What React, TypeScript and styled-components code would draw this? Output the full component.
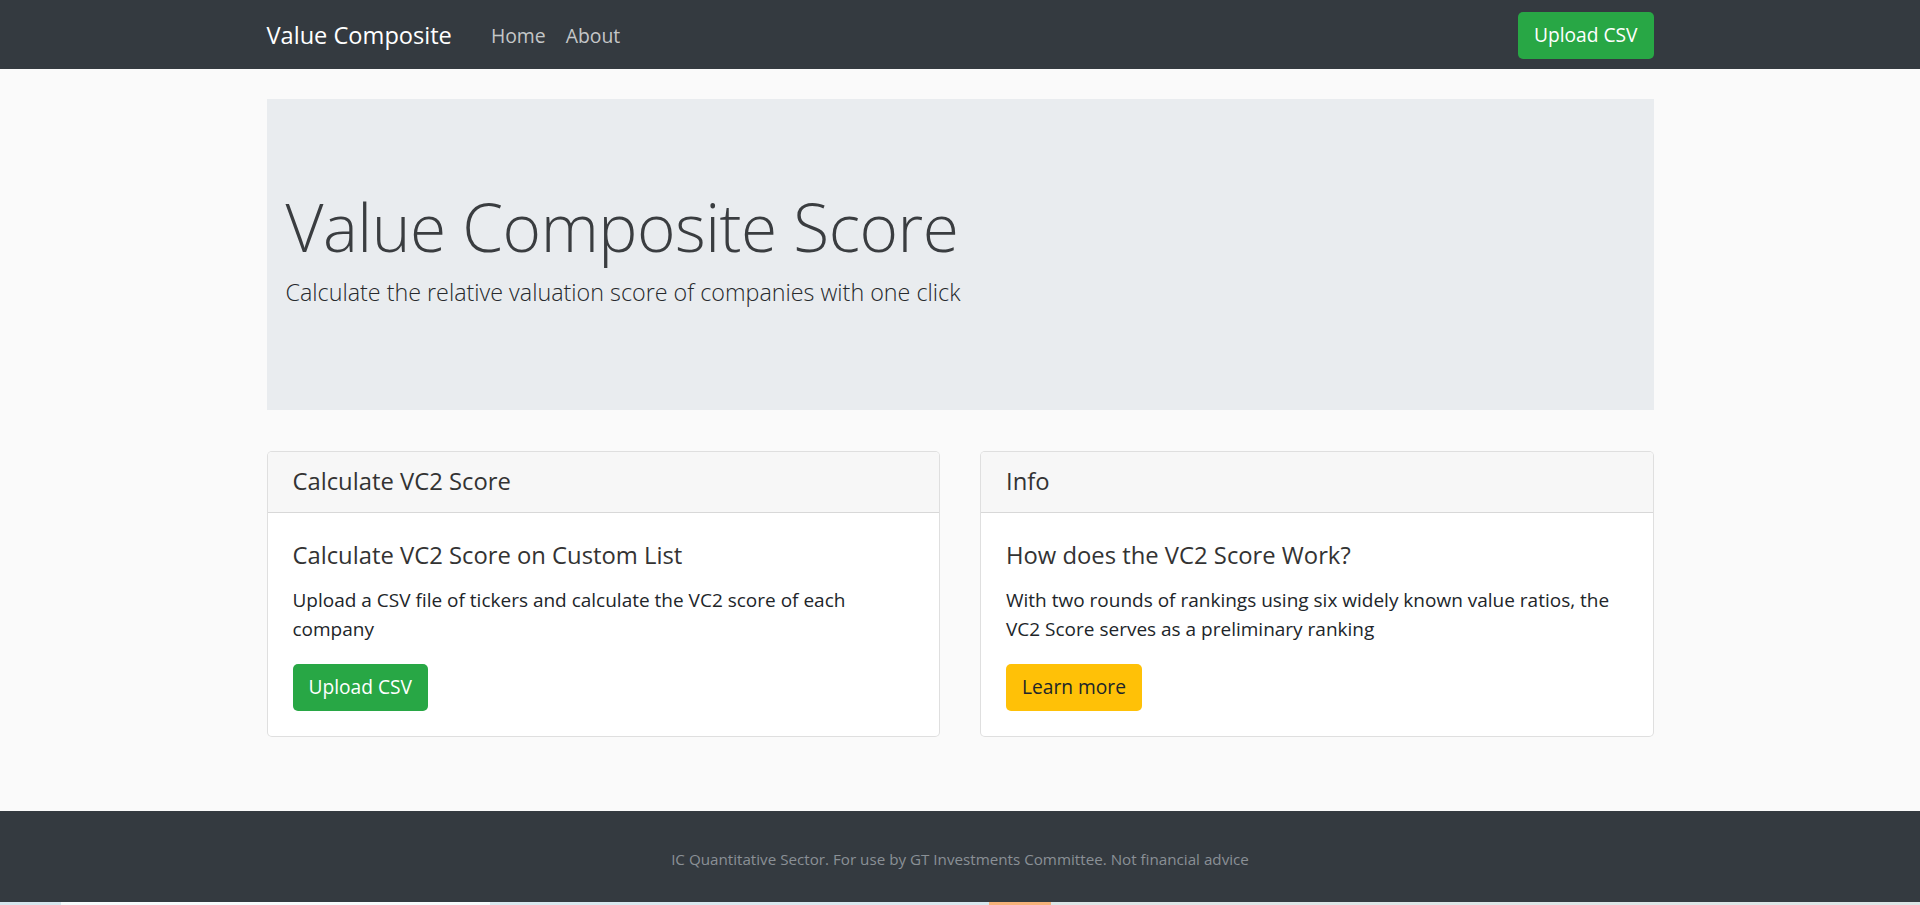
import styled, { createGlobalStyle } from "styled-components";

const GlobalStyle = createGlobalStyle`
  * {
    box-sizing: border-box;
  }

  body {
    margin: 0;
    background-color: #fafafa;
    color: #212529;
    font-family: "Open Sans", "Noto Sans", "Liberation Sans", sans-serif;
    font-size: 19px;
    line-height: 1.5;
  }
`;

const Page = styled.div`
  min-height: 905px;
  display: flex;
  flex-direction: column;
`;

const NavBar = styled.nav`
  background-color: #343a40;
  height: 69px;
  display: flex;
  align-items: center;
`;

const Container = styled.div`
  width: 1387px;
  margin: 0 auto;
`;

const NavInner = styled(Container)`
  display: flex;
  align-items: center;
  padding-top: 2px;
`;

const Brand = styled.a`
  color: #ffffff;
  font-size: 23.6px;
  margin-right: 39px;
  text-decoration: none;
`;

const NavLink = styled.a`
  color: rgba(255, 255, 255, 0.72);
  font-size: 19.4px;
  margin-right: 20px;
  text-decoration: none;
`;

const Spacer = styled.div`
  flex: 1;
`;

const Button = styled.a<{ $variant: "success" | "warning" }>`
  display: inline-flex;
  align-items: center;
  justify-content: center;
  height: 47px;
  padding: 0 16px;
  border-radius: 5px;
  font-size: 19.2px;
  text-decoration: none;
  background-color: ${(p) => (p.$variant === "success" ? "#28a745" : "#ffc107")};
  color: ${(p) => (p.$variant === "success" ? "#ffffff" : "#212529")};
`;

const Main = styled(Container)`
  flex: 1;
  padding-top: 30px;
`;

const Jumbotron = styled.section`
  background-color: #e9ecef;
  height: 311px;
  padding: 0 19px;
  display: flex;
  flex-direction: column;
  justify-content: center;
`;

const Title = styled.h1`
  margin: 0 0 8px 0;
  font-size: 65.8px;
  font-weight: 300;
  line-height: 1.2;
  color: #3a3d40;
  letter-spacing: -0.5px;
`;

const Lead = styled.p`
  margin: 0 0 12px 0;
  font-size: 23.3px;
  font-weight: 300;
  color: #26292c;
`;

const CardRow = styled.div`
  margin-top: 41px;
  display: grid;
  grid-template-columns: 1fr 1fr;
  align-items: start;
  gap: 40px;
`;

const Card = styled.div`
  background-color: #ffffff;
  border: 1px solid rgba(0, 0, 0, 0.125);
  border-radius: 5px;
  overflow: hidden;
`;

const CardHeader = styled.div`
  background-color: #f7f7f7;
  border-bottom: 1px solid rgba(0, 0, 0, 0.125);
  height: 61px;
  padding: 0 25px;
  display: flex;
  align-items: center;
  font-size: 23.8px;
  color: #333;
`;

const CardBody = styled.div`
  padding: 28px 25px 25px;
`;

const CardTitle = styled.h5`
  margin: 0 0 16px 0;
  font-size: 23.8px;
  font-weight: 400;
  line-height: 1.2;
  color: #333;
`;

const CardText = styled.p`
  margin: 0 0 19px 0;
  font-size: 19px;
  line-height: 29.5px;
  color: #212529;
`;

const Footer = styled.footer`
  background-color: #343a40;
  height: 91px;
  display: flex;
  align-items: center;
  justify-content: center;
  color: #8a9096;
  font-size: 15.2px;
  padding-top: 6px;
`;

const TaskStrip = styled.div`
  height: 3px;
  display: grid;
  grid-template-columns: 61px 429px 499px 62px 1fr;
  background-color: #d7e7ee;
`;

const StripPart = styled.div<{ $color: string }>`
  background-color: ${(p) => p.$color};
`;

function App() {
  return (
    <>
      <GlobalStyle />
      <Page>
        <NavBar>
          <NavInner>
            <Brand href="#">Value Composite</Brand>
            <NavLink href="#">Home</NavLink>
            <NavLink href="#">About</NavLink>
            <Spacer />
            <Button $variant="success" href="#">
              Upload CSV
            </Button>
          </NavInner>
        </NavBar>
        <Main>
          <Jumbotron>
            <Title>Value Composite Score</Title>
            <Lead>Calculate the relative valuation score of companies with one click</Lead>
          </Jumbotron>
          <CardRow>
            <Card>
              <CardHeader>Calculate VC2 Score</CardHeader>
              <CardBody>
                <CardTitle>Calculate VC2 Score on Custom List</CardTitle>
                <CardText>Upload a CSV file of tickers and calculate the VC2 score of each company</CardText>
                <Button $variant="success" href="#">
                  Upload CSV
                </Button>
              </CardBody>
            </Card>
            <Card>
              <CardHeader>Info</CardHeader>
              <CardBody>
                <CardTitle>How does the VC2 Score Work?</CardTitle>
                <CardText>
                  With two rounds of rankings using six widely known value ratios, the VC2 Score serves as a
                  preliminary ranking
                </CardText>
                <Button $variant="warning" href="#">
                  Learn more
                </Button>
              </CardBody>
            </Card>
          </CardRow>
        </Main>
        <Footer>IC Quantitative Sector. For use by GT Investments Committee. Not financial advice</Footer>
        <TaskStrip>
          <StripPart $color="#d7e7ee" />
          <StripPart $color="#f7fbfc" />
          <StripPart $color="#d9e9ef" />
          <StripPart $color="#f7b27a" />
          <StripPart $color="#dde6e6" />
        </TaskStrip>
      </Page>
    </>
  );
}

export default App;
